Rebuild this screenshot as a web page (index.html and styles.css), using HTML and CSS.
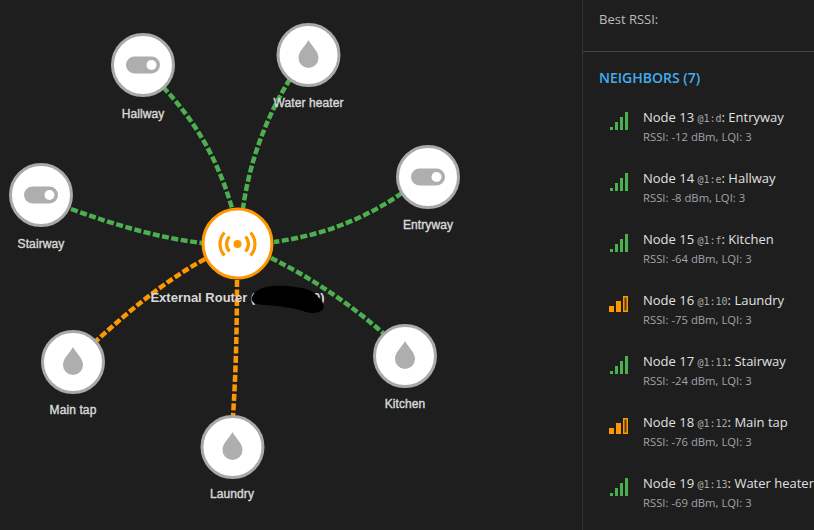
FILE: index.html
```html
<!DOCTYPE html>
<html lang="en">
<head>
<meta charset="utf-8">
<title>Network map</title>
<link rel="stylesheet" href="styles.css">
</head>
<body>
<main class="app">
  <section class="canvas">
    <svg class="graph" viewBox="0 0 582 530" width="582" height="530">
      <defs>
        <g id="drop"><path d="M0-15C-3-9-10-4-10 3A10 10 0 0 0 10 3C10-4 3-9 0-15Z" fill="#aeaeae"/></g>
        <g id="toggle"><rect x="-17" y="-8.500" width="34" height="17" rx="8.500" fill="#aeaeae"/><circle cx="8.500" cy="0" r="5" fill="#fff"/></g>
      </defs>
      <g class="links">
        <path class="green" d="M163 87C196 122 218 160 232 208"/>
        <path class="green" d="M290 79C266 118 250 160 243 208"/>
        <path class="green" d="M402 193C362 221 318 236 274 242"/>
        <path class="green" d="M71 209C118 226 160 238 202 243"/>
        <path class="green" d="M271 258C310 277 350 304 383 333"/>
        <path class="orange" d="M205 259C166 280 130 310 95 342"/>
        <path class="orange" d="M237 280C237 325 236 370 233 416"/>
      </g>
      <g class="node"><circle cx="143" cy="65" r="30.500"/><use href="#toggle" x="143" y="65"/></g>
      <g class="node"><circle cx="308.500" cy="55" r="30.500"/><use href="#drop" x="308.500" y="55"/></g>
      <g class="node"><circle cx="428" cy="177" r="30.500"/><use href="#toggle" x="428" y="177"/></g>
      <g class="node"><circle cx="41" cy="195" r="30.500"/><use href="#toggle" x="41" y="195"/></g>
      <g class="node"><circle cx="405" cy="356" r="30.500"/><use href="#drop" x="405" y="356"/></g>
      <g class="node"><circle cx="73" cy="362" r="30.500"/><use href="#drop" x="73" y="362"/></g>
      <g class="node"><circle cx="232.500" cy="447" r="30.500"/><use href="#drop" x="232.500" y="447"/></g>
      <circle class="hub" cx="237.500" cy="243.500" r="34.500"/>
      <g class="hub-icon">
        <circle cx="237.500" cy="244" r="4"/>
        <path d="M229.500 236.500A11 11 0 0 0 229.500 251.500M245.500 236.500A11 11 0 0 1 245.500 251.500"/>
        <path d="M224.500 232.500A17 17 0 0 0 224.500 255.500M250.500 232.500A17 17 0 0 1 250.500 255.500"/>
      </g>
      <text class="label" x="143" y="118">Hallway</text>
      <text class="label" x="308.500" y="107">Water heater</text>
      <text class="label" x="428" y="229">Entryway</text>
      <text class="label" x="41" y="248">Stairway</text>
      <text class="label" x="405" y="408">Kitchen</text>
      <text class="label" x="73" y="414">Main tap</text>
      <text class="label" x="232" y="498">Laundry</text>
      <text class="label-hub" x="237.500" y="302">External Router (0x0000000)</text>
      <path class="redaction" d="M252 297C256 286 275 284 295 287C306 288 314 291 318 297C322 300 325 304 323 309C320 313 314 314 306 312C294 308 280 306 265 305C256 304 250 303 252 297Z"/>
    </svg>
  </section>
  <aside class="side">
    <div class="summary">Best RSSI:</div>
    <div class="neighbors">
      <h2 class="heading">NEIGHBORS (7)</h2>
      <ul class="list">
        <li class="row">
          <svg class="signal good" width="20" height="20" viewBox="0 0 20 20"><rect x="1" y="16" width="3" height="3"/><rect x="6" y="11" width="3" height="8"/><rect x="11" y="6" width="3" height="13"/><rect x="16" y="1" width="3" height="18"/></svg>
          <div class="info"><div class="name">Node 13 <code class="addr">@1:d</code>: Entryway</div><div class="meta">RSSI: -12 dBm, LQI: 3</div></div>
        </li>
        <li class="row">
          <svg class="signal good" width="20" height="20" viewBox="0 0 20 20"><rect x="1" y="16" width="3" height="3"/><rect x="6" y="11" width="3" height="8"/><rect x="11" y="6" width="3" height="13"/><rect x="16" y="1" width="3" height="18"/></svg>
          <div class="info"><div class="name">Node 14 <code class="addr">@1:e</code>: Hallway</div><div class="meta">RSSI: -8 dBm, LQI: 3</div></div>
        </li>
        <li class="row">
          <svg class="signal good" width="20" height="20" viewBox="0 0 20 20"><rect x="1" y="16" width="3" height="3"/><rect x="6" y="11" width="3" height="8"/><rect x="11" y="6" width="3" height="13"/><rect x="16" y="1" width="3" height="18"/></svg>
          <div class="info"><div class="name">Node 15 <code class="addr">@1:f</code>: Kitchen</div><div class="meta">RSSI: -64 dBm, LQI: 3</div></div>
        </li>
        <li class="row">
          <svg class="signal warn" width="20" height="20" viewBox="0 0 20 20"><rect x="0" y="12" width="5" height="6"/><rect x="7" y="7" width="5" height="11"/><rect class="empty" x="14.750" y="2.750" width="3.500" height="14.500"/></svg>
          <div class="info"><div class="name">Node 16 <code class="addr">@1:10</code>: Laundry</div><div class="meta">RSSI: -75 dBm, LQI: 3</div></div>
        </li>
        <li class="row">
          <svg class="signal good" width="20" height="20" viewBox="0 0 20 20"><rect x="1" y="16" width="3" height="3"/><rect x="6" y="11" width="3" height="8"/><rect x="11" y="6" width="3" height="13"/><rect x="16" y="1" width="3" height="18"/></svg>
          <div class="info"><div class="name">Node 17 <code class="addr">@1:11</code>: Stairway</div><div class="meta">RSSI: -24 dBm, LQI: 3</div></div>
        </li>
        <li class="row">
          <svg class="signal warn" width="20" height="20" viewBox="0 0 20 20"><rect x="0" y="12" width="5" height="6"/><rect x="7" y="7" width="5" height="11"/><rect class="empty" x="14.750" y="2.750" width="3.500" height="14.500"/></svg>
          <div class="info"><div class="name">Node 18 <code class="addr">@1:12</code>: Main tap</div><div class="meta">RSSI: -76 dBm, LQI: 3</div></div>
        </li>
        <li class="row">
          <svg class="signal good" width="20" height="20" viewBox="0 0 20 20"><rect x="1" y="16" width="3" height="3"/><rect x="6" y="11" width="3" height="8"/><rect x="11" y="6" width="3" height="13"/><rect x="16" y="1" width="3" height="18"/></svg>
          <div class="info"><div class="name">Node 19 <code class="addr">@1:13</code>: Water heater</div><div class="meta">RSSI: -69 dBm, LQI: 3</div></div>
        </li>
      </ul>
    </div>
  </aside>
</main>
</body>
</html>
```
FILE: styles.css
```css
html, body {
  margin: 0;
  height: 100%;
  overflow: hidden;
  background: #1e1e1e;
}

.app {
  display: flex;
  width: 814px;
  height: 530px;
  overflow: hidden;
  font-family: "Open Sans", "Noto Sans", sans-serif;
}

.canvas {
  flex: 0 0 582px;
  height: 530px;
}

.graph {
  display: block;
}

.links path {
  fill: none;
  stroke-width: 4.500;
  stroke-dasharray: 7 2.500;
}

.links .green { stroke: #4caf50; }
.links .orange { stroke: #ff9800; }

.node circle {
  fill: #fff;
  stroke: #a9a9a9;
  stroke-width: 3;
}

.hub {
  fill: #fff;
  stroke: #ff9800;
  stroke-width: 3;
}

.hub-icon circle { fill: #ff9800; }

.hub-icon path {
  fill: none;
  stroke: #ff9800;
  stroke-width: 3.200;
}

.label {
  font-family: "Liberation Sans", Arial, sans-serif;
  font-size: 12px;
  letter-spacing: 0.100px;
  fill: #d8d8d8;
  stroke: #d8d8d8;
  stroke-width: 0.400;
  text-anchor: middle;
}

.label-hub {
  font-family: "Liberation Sans", Arial, sans-serif;
  font-size: 13px;
  font-weight: 700;
  fill: #d8d8d8;
  text-anchor: middle;
}

.redaction { fill: #000; }

.side {
  flex: 0 0 231px;
  border-left: 1px solid #333;
  color: #e1e1e1;
}

.summary {
  height: 52px;
  box-sizing: border-box;
  padding: 10px 16px 0;
  border-bottom: 1px solid #444;
  font-size: 13px;
  line-height: 18px;
  color: #b8bcc0;
}

.neighbors {
  padding: 17px 0 0 16px;
}

.heading {
  margin: 0;
  font-size: 14px;
  line-height: 18px;
  font-weight: 600;
  color: #41aef0;
}

.list {
  margin: 9px 0 0;
  padding: 0;
  list-style: none;
}

.row {
  display: flex;
  align-items: flex-start;
  gap: 14px;
  box-sizing: border-box;
  height: 61px;
  padding: 12px 0 0 10px;
}

.signal {
  flex: none;
  margin-top: 3px;
}

.signal.good rect { fill: #4caf50; }
.signal.warn rect { fill: #ff9800; }
.signal.warn .empty { fill: #5a3c10; stroke: #ff9800; stroke-width: 1.500; }

.info { white-space: nowrap; }

.name {
  font-size: 13px;
  line-height: 19px;
  color: #e1e1e1;
}

.addr {
  font-family: "DejaVu Sans Mono", "Liberation Mono", monospace;
  font-size: 10px;
  color: #a8a8a8;
}

.meta {
  margin-top: 1px;
  font-size: 11.300px;
  line-height: 15px;
  color: #a0a4a8;
}
```
